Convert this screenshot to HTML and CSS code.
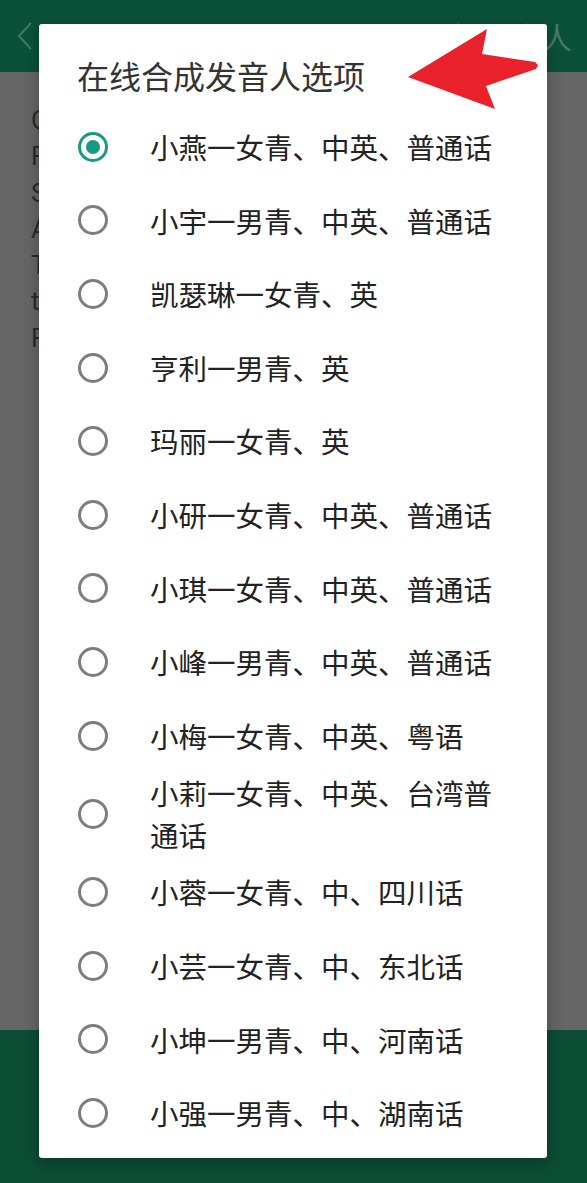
FILE: index.html
```html
<!DOCTYPE html>
<html lang="zh-CN">
<head>
    <meta charset="UTF-8">
    <meta name="viewport" content="width=device-width, initial-scale=1.0">
    <title>在线合成发音人选项</title>
    <link rel="stylesheet" href="styles.css">
</head>
<body>

    <div class="screen">
        <header class="appbar">
            <svg class="back" width="16" height="28" viewBox="0 0 16 28">
                <polyline points="14,1 2,14 14,27" fill="none" stroke="#3f7862" stroke-width="2.2"/>
            </svg>
            <span class="appbar-title">选择发音人</span>
        </header>

        <!-- page behind the dialog, dimmed -->
        <main class="content">
            <p>Cloud</p>
            <p>For</p>
            <p>Speech</p>
            <p>And</p>
            <p>Text</p>
            <p>to</p>
            <p>For</p>
        </main>

        <footer class="bottombar"></footer>
    </div>

    <!-- Dialog -->
    <div class="dialog">
        <h2 class="dialog-title">在线合成发音人选项</h2>
        <ul class="options">
            <li class="option"><span class="radio checked"></span><span class="option-text">小燕一女青、中英、普通话</span></li>
            <li class="option"><span class="radio"></span><span class="option-text">小宇一男青、中英、普通话</span></li>
            <li class="option"><span class="radio"></span><span class="option-text">凯瑟琳一女青、英</span></li>
            <li class="option"><span class="radio"></span><span class="option-text">亨利一男青、英</span></li>
            <li class="option"><span class="radio"></span><span class="option-text">玛丽一女青、英</span></li>
            <li class="option"><span class="radio"></span><span class="option-text">小研一女青、中英、普通话</span></li>
            <li class="option"><span class="radio"></span><span class="option-text">小琪一女青、中英、普通话</span></li>
            <li class="option"><span class="radio"></span><span class="option-text">小峰一男青、中英、普通话</span></li>
            <li class="option"><span class="radio"></span><span class="option-text">小梅一女青、中英、粤语</span></li>
            <li class="option"><span class="radio"></span><span class="option-text">小莉一女青、中英、台湾普通话</span></li>
            <li class="option"><span class="radio"></span><span class="option-text">小蓉一女青、中、四川话</span></li>
            <li class="option"><span class="radio"></span><span class="option-text">小芸一女青、中、东北话</span></li>
            <li class="option"><span class="radio"></span><span class="option-text">小坤一男青、中、河南话</span></li>
            <li class="option"><span class="radio"></span><span class="option-text">小强一男青、中、湖南话</span></li>
        </ul>
    </div>

    <!-- red pointer arrow -->
    <svg class="arrow" width="145" height="90" viewBox="0 0 145 90">
        <polygon points="8,52 87,4 82,29 135,37 138,40 136,44 86,61 95,84" fill="#e8212b"/>
    </svg>

</body>
</html>
```

FILE: styles.css
```css
body {
    margin: 0;
    font-family: "Noto Sans CJK SC", "Noto Sans", sans-serif;
    background-color: #666666;
}
.screen {
    display: flex;
    flex-direction: column;
    height: 1183px;
}
.appbar {
    height: 72px;
    background-color: #0b5139;
    display: flex;
    align-items: center;
    justify-content: space-between;
    padding: 0 15px 0 17px;
}
.appbar-title {
    font-size: 30px;
    color: #467a65;
    line-height: 1;
}
.content {
    flex: 1;
    background-color: #666666;
    padding: 30px 0 0 31px;
    font-family: Roboto, "Noto Sans", sans-serif;
    font-size: 26px;
    color: #2b2b2b;
}
.content p {
    margin: 0;
    line-height: 36.3px;
}
.bottombar {
    height: 153px;
    background-color: #0c4d35;
}

/* Dialog */
.dialog {
    position: absolute;
    left: 39px;
    top: 24px;
    width: 508px;
    height: 1134px;
    background-color: #ffffff;
    border-radius: 3px;
    box-shadow: 0 4px 16px rgba(0, 0, 0, 0.3);
}
.dialog-title {
    margin: 0;
    padding: 32px 38px 16px;
    font-size: 32px;
    font-weight: normal;
    line-height: 38px;
    color: #333333;
}
.options {
    list-style: none;
    margin: 0;
    padding: 0;
}
.option {
    display: flex;
    align-items: center;
    min-height: 73.6px;
    padding: 0 42px 0 39px;
}
.radio {
    flex: none;
    box-sizing: border-box;
    width: 30px;
    height: 30px;
    border: 3px solid #7d7d7d;
    border-radius: 50%;
    margin-right: 42px;
    display: flex;
    align-items: center;
    justify-content: center;
}
.radio.checked {
    border-color: #179a85;
}
.radio.checked::after {
    content: "";
    width: 14px;
    height: 14px;
    border-radius: 50%;
    background-color: #179a85;
}
.option-text {
    font-size: 28.5px;
    line-height: 41.5px;
    color: #222222;
}

.arrow {
    position: absolute;
    left: 400px;
    top: 25px;
}
```
